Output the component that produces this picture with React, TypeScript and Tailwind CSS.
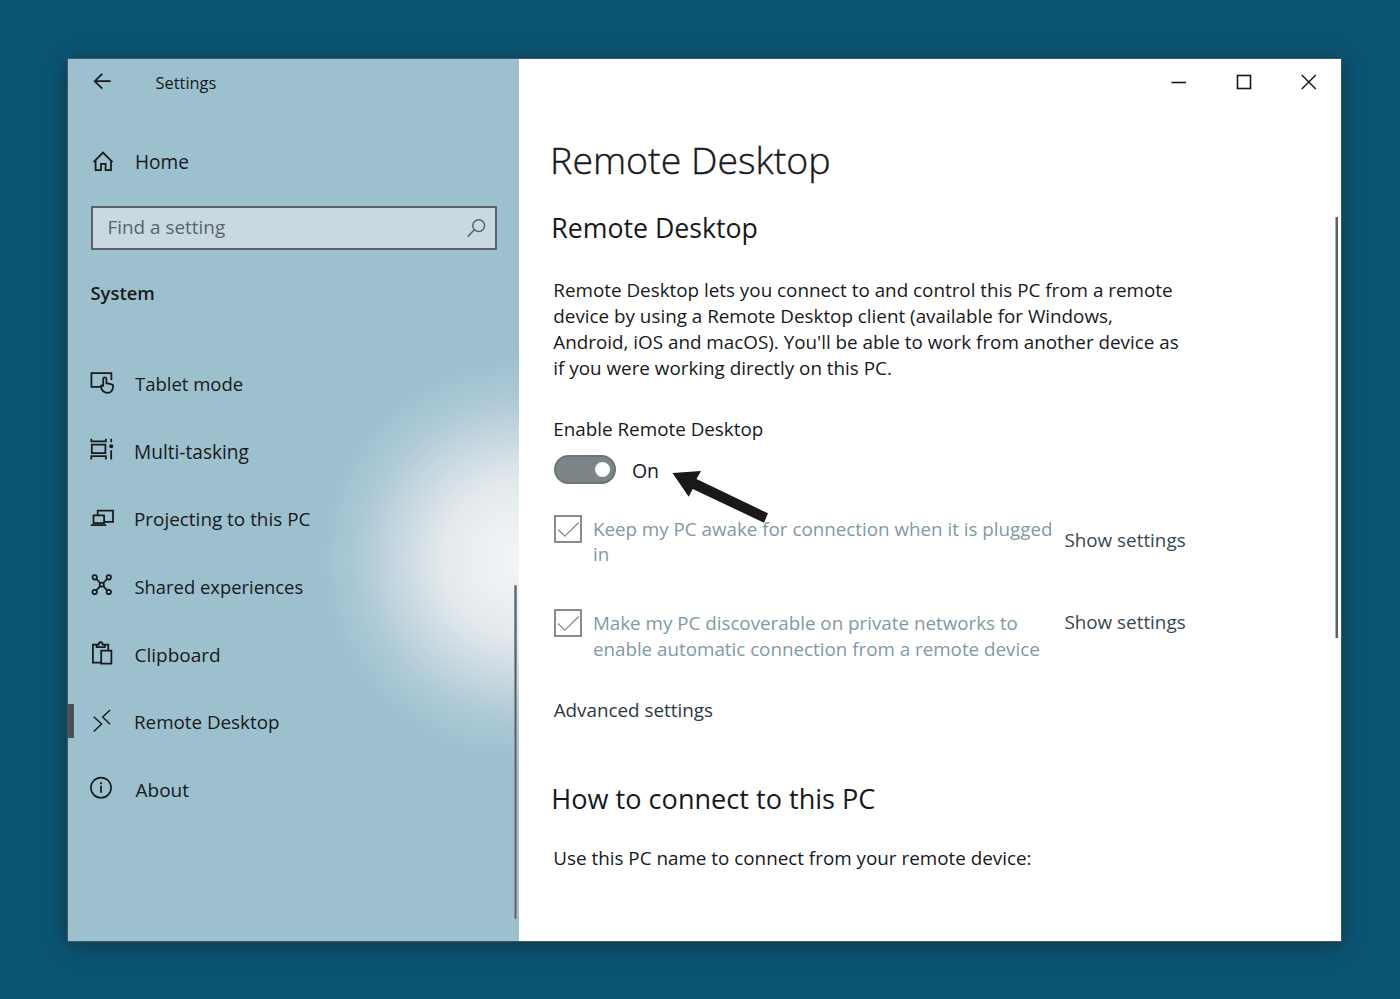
import type { ReactNode } from "react";

function Icon({ children }: { children: ReactNode }) {
  return (
    <svg
      viewBox="0 0 28 28"
      className="h-7 w-7 shrink-0"
      fill="none"
      stroke="#17191c"
      strokeWidth="1.75"
    >
      {children}
    </svg>
  );
}

const HomeIcon = () => (
  <Icon>
    <path d="M5.5 14.2 15 4.6l9.5 9.6M7.6 12.4v9.8H13v-6.4h4.6v6.4H23v-9.8" />
  </Icon>
);

const TabletIcon = () => (
  <Icon>
    <path d="M12.6 17.8H3.4V4h20v7" />
    <path d="M15.2 17.6V10a1.6 1.6 0 0 1 3.2 0v4.200l4.600 1c1.600.3 2.200 1 2.100 2.300-.3 4.200-2.400 6.300-5.600 6.300-3.400 0-5.800-2.300-6.700-6.300.2-1.400 1.500-1.300 2.400-.1z" />
  </Icon>
);

const MultitaskIcon = () => (
  <Icon>
    <path d="M3.3 1.8v2.500h14.600V1.800M3.800 7.500h13.600v8.700H3.800zM3.300 22.600V19h14.600v3.600M23.200 1.800v3.500M23.200 13.300v9.300" />
    <circle cx="23.2" cy="9.3" r="2" fill="#17191c" stroke="none" />
  </Icon>
);

const ProjectIcon = () => (
  <Icon>
    <path d="M9.700 10V5.500H25v11.400h-8.300M5.500 10.400h10.600V18H5.500zM2.700 20.200h15.600" />
  </Icon>
);

const SharedIcon = () => (
  <Icon>
    <circle cx="6.7" cy="5.3" r="2.2" />
    <circle cx="20.8" cy="5.3" r="2.2" />
    <circle cx="6.7" cy="20" r="2.2" />
    <circle cx="20.8" cy="20" r="2.2" />
    <circle cx="13.75" cy="12.6" r="2.1" />
    <path d="m8.3 6.9 3.9 4.100M19.200 6.900 15.300 11M8.300 18.400l3.900-4.200M19.200 18.400l-3.900-4.200" />
  </Icon>
);

const ClipboardIcon = () => (
  <Icon>
    <path d="M13 22.600H4.900V4.700h3.300M17 4.700h3.300v5.600M8.600 7.200V4.500h2.100c.2-3.200 3.700-3.200 3.900 0h2.200v2.700zM13.200 10.500h10.200v13H13.200z" />
  </Icon>
);

const RemoteIcon = () => (
  <Icon>
    <path strokeWidth="1.4" d="m5.700 8.700 7.900 7.400-7.900 7.400M22.100 2l-7.400 7.100 7.400 7.200" />
  </Icon>
);

const AboutIcon = () => (
  <Icon>
    <circle cx="13" cy="12.7" r="10.1" strokeWidth="1.6" />
    <path d="M13 10.800v7M13 7.300v1.900" />
  </Icon>
);

const navItems = [
  { label: "Tablet mode", icon: <TabletIcon />, style: "pl-[19px] text-[18.5px]" },
  { label: "Multi-tasking", icon: <MultitaskIcon />, style: "pl-[18px] text-[19.1px]" },
  { label: "Projecting to this PC", icon: <ProjectIcon />, style: "pl-[18px] text-[18.9px]" },
  { label: "Shared experiences", icon: <SharedIcon />, style: "pl-[18.5px] text-[18.4px]" },
  { label: "Clipboard", icon: <ClipboardIcon />, style: "pl-[18.5px] text-[19px]" },
  { label: "Remote Desktop", icon: <RemoteIcon />, style: "pl-[18px] text-[18.8px]", active: true },
  { label: "About", icon: <AboutIcon />, style: "pl-[19.5px] text-[19px]" },
];

function Sidebar() {
  return (
    <aside className="relative flex w-[451px] shrink-0 flex-col bg-[#9dc0ce] bg-[radial-gradient(circle_at_452px_500px,#f3f5f6_0px,#ecf0f2_40px,#e3e9ec_78px,#c3d5df_128px,#abc9d6_162px,#9ec1cf_198px,transparent_215px)]">
      <div className="flex h-[47px] items-center pl-[25px] pt-px">
        <svg viewBox="0 0 20 20" className="h-5 w-5" fill="none" stroke="#17191c" strokeWidth="1.7">
          <path d="M17.700 8.200H1.800M9.200.9 1.700 8.200l7.500 7.400" />
        </svg>
        <span className="pl-[42.5px] text-[16.4px]">Settings</span>
      </div>
      <div className="mt-[31.6px] flex h-12 items-center pl-5">
        <HomeIcon />
        <span className="pl-[19px] pt-0.5 text-[19.1px]">Home</span>
      </div>
      <div className="ml-[23px] mt-[20.4px] flex h-11 w-[406px] items-center justify-between border-2 border-[#5a6367] bg-[#c9d9e1] pl-[14.5px] pr-[9px]">
        <span className="-mt-0.5 text-[18.9px] text-[#596469]">Find a setting</span>
        <svg viewBox="0 0 20 20" className="h-5 w-5" fill="none" stroke="#596469" strokeWidth="1.5">
          <circle cx="12.7" cy="7.6" r="5.9" />
          <path d="m8.400 11.800-6.700 6.800" />
        </svg>
      </div>
      <h2 className="mt-[30px] pl-[22.5px] text-[18.4px] font-semibold leading-[26px]">System</h2>
      <nav className="mt-[43.6px] flex flex-col">
        {navItems.map((item) => (
          <div key={item.label} className="flex h-[67.67px] items-center">
            <span className={item.active ? "-mt-px h-[34px] w-1.5 bg-[#4b4f52]" : "w-1.5"} />
            <span className="w-3.5" />
            {item.icon}
            <span className="pt-[1.6px]">
              <span className={item.style}>{item.label}</span>
            </span>
          </div>
        ))}
      </nav>
      <div className="absolute left-[446px] top-[526px] h-[334px] w-[3px] rounded-sm border-x border-[#899298] bg-[#5a6165]" />
    </aside>
  );
}

function CheckRow({ children, linkStyle }: { children: ReactNode; linkStyle: string }) {
  return (
    <div className="flex items-start">
      <svg viewBox="0 0 28 28" className="h-7 w-7 shrink-0" fill="none" stroke="#858b8e">
        <rect x="1" y="1" width="26" height="26" strokeWidth="2" />
        <path d="m4 14.500 6.800 6.600L24.700 7.500" strokeWidth="1.3" />
      </svg>
      <p className="w-[482.5px] whitespace-nowrap pl-[11px] pt-[2px] text-[18.8px] leading-[25.7px] text-[#7f99a5]">
        {children}
      </p>
      <a className={`text-[18.85px] leading-[26px] text-[#37474f] ${linkStyle}`}>Show settings</a>
    </div>
  );
}

function Content() {
  return (
    <main className="relative flex grow flex-col bg-white">
      <div className="flex h-[45px] items-center justify-end pr-6">
        <svg viewBox="0 0 146 16" className="h-4 w-[146px]" fill="none" stroke="#17191c">
          <path d="M.5 8.500h14.500" strokeWidth="1.6" />
          <rect x="66.5" y="1.5" width="13" height="13" strokeWidth="1.6" />
          <path d="m130.800 1 14 14m0-14-14 14" strokeWidth="1.5" />
        </svg>
      </div>
      <div className="flex flex-col pl-[34.3px] text-[18.83px] leading-[26px]">
        <h1 className="-ml-[3.2px] mt-[30.7px] text-[37.5px] font-light leading-[50px] [-webkit-text-stroke:0.4px_#17191c]">
          Remote Desktop
        </h1>
        <h2 className="-ml-[2px] mt-[25.5px] text-[26.7px] leading-9">Remote Desktop</h2>
        <p className="mt-[31px]">
          Remote Desktop lets you connect to and control this PC from a remote
          <br />
          device by using a Remote Desktop client (available for Windows,
          <br />
          Android, iOS and macOS). You'll be able to work from another device as
          <br />
          if you were working directly on this PC.
        </p>
        <div className="mt-[34.8px]">Enable Remote Desktop</div>
        <div className="ml-[0.6px] mt-[12.7px] flex h-[29px] items-center">
          <div className="flex h-[29px] w-[62px] items-center justify-end rounded-full border-2 border-[#6c7477] bg-[#7d8588] pr-1">
            <span className="h-[15px] w-[15px] rounded-full bg-white" />
          </div>
          <span className="pl-4 pt-1 text-[19.5px]">On</span>
        </div>
        <div className="ml-[0.6px] mt-[31px] flex h-[94.5px] flex-col">
          <CheckRow linkStyle="mt-3">
            Keep my PC awake for connection when it is plugged
            <br />
            in
          </CheckRow>
        </div>
        <div className="ml-[0.6px] flex flex-col">
          <CheckRow linkStyle="mt-0">
            Make my PC discoverable on private networks to
            <br />
            enable automatic connection from a remote device
          </CheckRow>
        </div>
        <a className="ml-[0.4px] mt-[34px] text-[#2b383e]">Advanced settings</a>
        <h2 className="-ml-[2px] mt-[58px] text-[27.1px] leading-9">How to connect to this PC</h2>
        <p className="mt-[28px]">Use this PC name to connect from your remote device:</p>
      </div>
      <svg
        viewBox="0 0 100 54"
        className="absolute left-[151px] top-[411px] h-[54px] w-[100px]"
        fill="#1a181a"
      >
        <path d="M2.500 3 31 1l-4.500 8L98 43.300l-4 9.400L22.700 19l-4 7.700z" />
      </svg>
      <div className="absolute right-[3px] top-[158px] h-[421px] w-[3px] border-l border-[#a5b0b6] bg-[#5a6165]" />
    </main>
  );
}

export default function App() {
  return (
    <div className="h-[999px] w-[1400px] overflow-hidden bg-[#0b5574] pl-[68px] pt-[59px] font-['Open_Sans',sans-serif] text-[#17191c]">
      <div className="flex h-[882px] w-[1273px] shadow-[0_0_0_1px_#3f5862,0_3px_20px_0_rgba(20,15,18,0.5)]">
        <Sidebar />
        <Content />
      </div>
    </div>
  );
}
